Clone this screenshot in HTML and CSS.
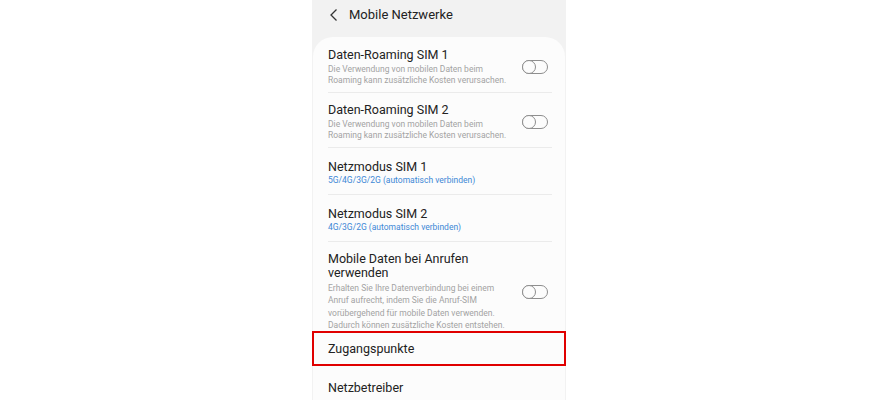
FILE: index.html
```html
<!DOCTYPE html>
<html lang="de">
<head>
    <meta charset="UTF-8">
    <meta name="viewport" content="width=device-width, initial-scale=1.0">
    <title>Mobile Netzwerke</title>
    <link rel="stylesheet" href="styles.css">
</head>
<body>

    <div class="screen">
        <header class="topbar">
            <svg class="back" width="10" height="14" viewBox="0 0 10 14">
                <path d="M7.5 1.5 L2 7 L7.5 12.5" fill="none" stroke="#333" stroke-width="1.3"/>
            </svg>
            <h1>Mobile Netzwerke</h1>
        </header>

        <div class="card">
            <div class="item item-tall">
                <div class="item-text">
                    <h2>Daten-Roaming SIM 1</h2>
                    <p class="sub">Die Verwendung von mobilen Daten beim Roaming kann zusätzliche Kosten verursachen.</p>
                </div>
                <span class="toggle"></span>
            </div>
            <div class="item item-tall">
                <div class="item-text">
                    <h2>Daten-Roaming SIM 2</h2>
                    <p class="sub">Die Verwendung von mobilen Daten beim Roaming kann zusätzliche Kosten verursachen.</p>
                </div>
                <span class="toggle"></span>
            </div>
            <div class="item">
                <div class="item-text">
                    <h2>Netzmodus SIM 1</h2>
                    <p class="sub blue">5G/4G/3G/2G (automatisch verbinden)</p>
                </div>
            </div>
            <div class="item">
                <div class="item-text">
                    <h2>Netzmodus SIM 2</h2>
                    <p class="sub blue">4G/3G/2G (automatisch verbinden)</p>
                </div>
            </div>
            <div class="item item-long">
                <div class="item-text">
                    <h2>Mobile Daten bei Anrufen verwenden</h2>
                    <p class="sub">Erhalten Sie Ihre Datenverbindung bei einem Anruf aufrecht, indem Sie die Anruf-SIM vorübergehend für mobile Daten verwenden. Dadurch können zusätzliche Kosten entstehen.</p>
                </div>
                <span class="toggle"></span>
            </div>
            <div class="item item-single highlight">
                <div class="item-text">
                    <h2>Zugangspunkte</h2>
                </div>
            </div>
            <div class="item item-single">
                <div class="item-text">
                    <h2>Netzbetreiber</h2>
                </div>
            </div>
        </div>
    </div>

</body>
</html>
```

FILE: styles.css
```css
body {
    margin: 0;
    padding: 0;
    background-color: #fff;
    font-family: Roboto, "Liberation Sans", sans-serif;
    color: #222;
}

.screen {
    width: 254px;
    height: 400px;
    margin-left: 312px;
    background-color: #f2f2f2;
    overflow: hidden;
}

.topbar {
    height: 37px;
    display: flex;
    align-items: flex-start;
    padding: 7px 0 0 17px;
    box-sizing: border-box;
}

.back {
    margin-top: 1px;
}

.topbar h1 {
    margin: 0 0 0 10px;
    font-size: 13px;
    font-weight: 400;
    line-height: 16px;
    color: #222;
}

.card {
    background-color: #fcfcfc;
    border-radius: 20px;
    margin: 0 1px;
    padding-top: 1px;
    min-height: 400px;
}

.item {
    display: flex;
    align-items: center;
    margin: 0 13px 0 15px;
    padding: 9px 0 6px;
    border-bottom: 1px solid #ebebeb;
    height: 31px;
}

.item-tall {
    height: 39px;
}

.item-long {
    height: 79px;
    padding: 10px 0 0;
    border-bottom: none;
}

.item-single {
    height: 20px;
    padding: 11px 0 6px;
}

.item-text {
    flex: 1;
    padding-right: 14px;
}

.item h2 {
    margin: 0;
    font-size: 12.5px;
    font-weight: 400;
    line-height: 15px;
    color: #222;
}

.item-long h2 {
    line-height: 14px;
    margin-bottom: 2px;
}

.sub {
    margin: 2px 0 0;
    font-size: 8.5px;
    line-height: 11px;
    color: #a3a3a3;
}

.sub.blue {
    margin-top: 1px;
    line-height: 11.5px;
    color: #3e88d6;
}

.item-long .sub {
    margin-top: 0;
    line-height: 12.3px;
}

.toggle {
    position: relative;
    width: 24px;
    height: 12px;
    border: 1px solid #8e8e8e;
    border-radius: 8px;
    margin-right: 4px;
    flex-shrink: 0;
}

.toggle::before {
    content: "";
    position: absolute;
    left: -1px;
    top: -1px;
    width: 12px;
    height: 12px;
    border: 1px solid #8e8e8e;
    border-radius: 50%;
    background-color: #fcfcfc;
}

.highlight {
    margin: 0 -1px;
    padding: 0 13px 0 14px;
    border: 2px solid #e00000;
    height: 31px;
}
```
